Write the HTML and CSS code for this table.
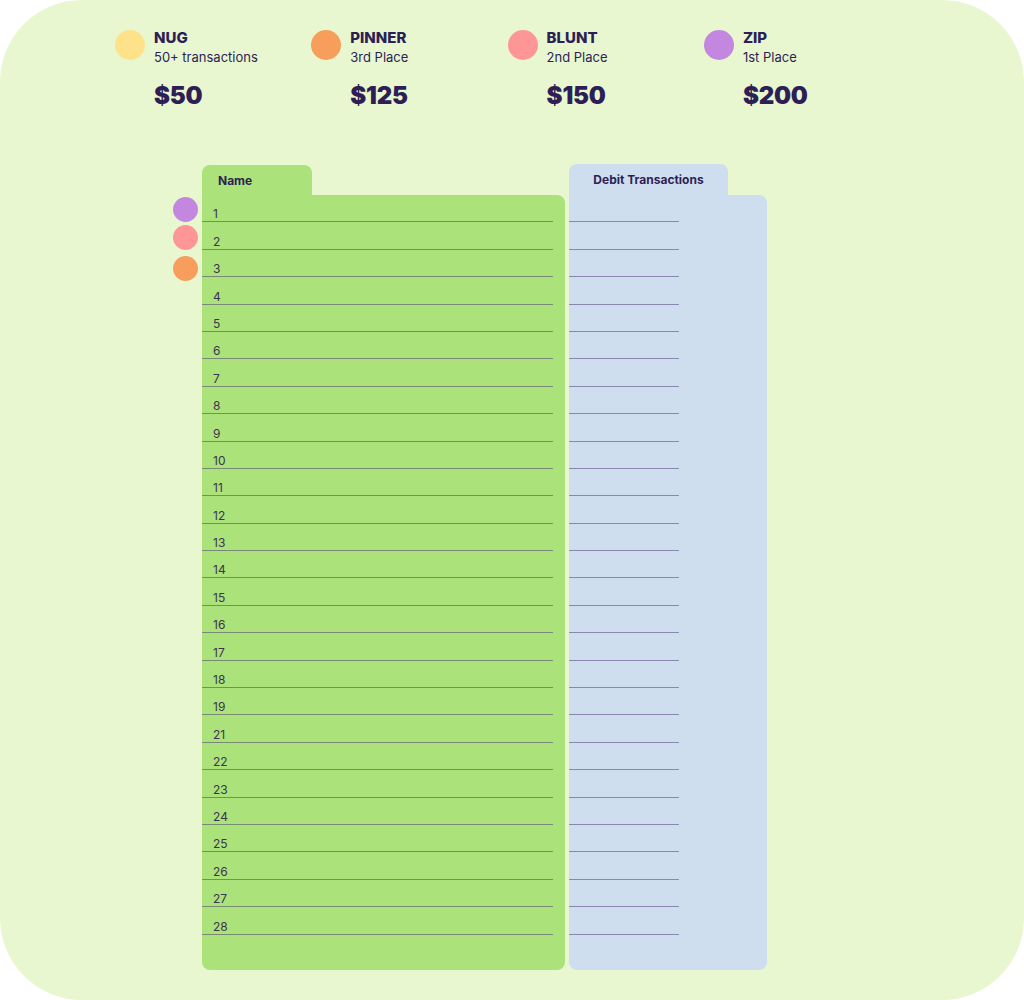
FILE: index.html
```html
<!DOCTYPE html>
<html lang="en">

<head>
    <meta charset="UTF-8">
    <meta name="viewport" content="width=device-width, initial-scale=1.0">
    <title>Leaderboard</title>
    <link rel="stylesheet" href="styles.css">
</head>

<body>

    <div class="page">
        <div class="prizes">
            <div class="prize">
                <div class="prize-head">
                    <span class="dot yellow"></span>
                    <div>
                        <div class="prize-name">NUG</div>
                        <div class="prize-sub">50+ transactions</div>
                    </div>
                </div>
                <div class="prize-amount">$50</div>
            </div>
            <div class="prize">
                <div class="prize-head">
                    <span class="dot orange"></span>
                    <div>
                        <div class="prize-name">PINNER</div>
                        <div class="prize-sub">3rd Place</div>
                    </div>
                </div>
                <div class="prize-amount">$125</div>
            </div>
            <div class="prize">
                <div class="prize-head">
                    <span class="dot pink"></span>
                    <div>
                        <div class="prize-name">BLUNT</div>
                        <div class="prize-sub">2nd Place</div>
                    </div>
                </div>
                <div class="prize-amount">$150</div>
            </div>
            <div class="prize">
                <div class="prize-head">
                    <span class="dot purple"></span>
                    <div>
                        <div class="prize-name">ZIP</div>
                        <div class="prize-sub">1st Place</div>
                    </div>
                </div>
                <div class="prize-amount">$200</div>
            </div>
        </div>

        <div class="board">
            <div class="markers">
                <span class="marker purple"></span>
                <span class="marker pink"></span>
                <span class="marker orange third"></span>
            </div>

            <div class="col names">
                <div class="tab">Name</div>
                <div class="panel">
                    <div class="row">1</div>
                    <div class="row">2</div>
                    <div class="row">3</div>
                    <div class="row">4</div>
                    <div class="row">5</div>
                    <div class="row">6</div>
                    <div class="row">7</div>
                    <div class="row">8</div>
                    <div class="row">9</div>
                    <div class="row">10</div>
                    <div class="row">11</div>
                    <div class="row">12</div>
                    <div class="row">13</div>
                    <div class="row">14</div>
                    <div class="row">15</div>
                    <div class="row">16</div>
                    <div class="row">17</div>
                    <div class="row">18</div>
                    <div class="row">19</div>
                    <div class="row">21</div>
                    <div class="row">22</div>
                    <div class="row">23</div>
                    <div class="row">24</div>
                    <div class="row">25</div>
                    <div class="row">26</div>
                    <div class="row">27</div>
                    <div class="row">28</div>
                </div>
            </div>

            <div class="col debits">
                <div class="tab">Debit Transactions</div>
                <div class="panel">
                    <div class="row"></div>
                    <div class="row"></div>
                    <div class="row"></div>
                    <div class="row"></div>
                    <div class="row"></div>
                    <div class="row"></div>
                    <div class="row"></div>
                    <div class="row"></div>
                    <div class="row"></div>
                    <div class="row"></div>
                    <div class="row"></div>
                    <div class="row"></div>
                    <div class="row"></div>
                    <div class="row"></div>
                    <div class="row"></div>
                    <div class="row"></div>
                    <div class="row"></div>
                    <div class="row"></div>
                    <div class="row"></div>
                    <div class="row"></div>
                    <div class="row"></div>
                    <div class="row"></div>
                    <div class="row"></div>
                    <div class="row"></div>
                    <div class="row"></div>
                    <div class="row"></div>
                    <div class="row"></div>
                </div>
            </div>
        </div>
    </div>

</body>

</html>
```

FILE: styles.css
```css
* {
    margin: 0;
    box-sizing: border-box;
}

body {
    margin: 0;
    padding: 0;
    background-color: #ffffff;
    font-family: Inter, "Open Sans", sans-serif;
    color: #2d1f55;
}

.page {
    width: 1024px;
    height: 1000px;
    background-color: #e8f7cf;
    border-radius: 82px;
    padding-top: 30px;
}

/* prizes */
.prizes {
    display: flex;
    padding-left: 115px;
}

.prize {
    width: 196.3px;
}

.prize-head {
    display: flex;
    align-items: flex-start;
}

.dot {
    width: 30px;
    height: 30px;
    border-radius: 50%;
    margin-right: 9px;
    flex-shrink: 0;
}

.prize-name {
    font-size: 15px;
    font-weight: 800;
    line-height: 18px;
    margin-top: -1px;
}

.prize-sub {
    font-size: 13px;
    line-height: 18px;
    margin-top: 1px;
}

.prize-amount {
    margin-left: 39px;
    margin-top: 15px;
    font-size: 24px;
    line-height: 30px;
    font-weight: 900;
    letter-spacing: -0.2px;
}

.yellow { background-color: #fde28a; }
.orange { background-color: #f79e5c; }
.pink { background-color: #ff9696; }
.purple { background-color: #c387e0; }

/* board */
.board {
    display: flex;
    align-items: flex-start;
    margin-top: 53px;
    padding-left: 173px;
}

.markers {
    width: 29px;
    margin-top: 31px;
    display: flex;
    flex-direction: column;
}

.marker {
    width: 25px;
    height: 25px;
    border-radius: 50%;
    margin-top: 3px;
}

.marker:first-child {
    margin-top: 2px;
}

.marker.third {
    margin-top: 6px;
}

.col {
    display: flex;
    flex-direction: column;
}

.names {
    width: 363px;
}

.debits {
    width: 198px;
    margin-left: 4px;
}

.tab {
    height: 30px;
    margin-top: 1px;
    border-radius: 8px 8px 0 0;
    font-size: 12px;
    font-weight: 700;
    display: flex;
    align-items: center;
}

.names .tab {
    width: 110px;
    padding-left: 16px;
    background-color: #abe27a;
}

.debits .tab {
    width: 159px;
    height: 31px;
    margin-top: 0;
    justify-content: center;
    background-color: #cedeee;
}

.panel {
    height: 775px;
    border-radius: 0 8px 8px 8px;
}

.names .panel {
    background-color: #abe27a;
    padding-right: 12px;
}

.debits .panel {
    background-color: #cedeee;
    padding-right: 88px;
}

.row {
    height: 27.4px;
    border-bottom: 1px solid rgba(70, 50, 110, 0.5);
    display: flex;
    align-items: flex-end;
    padding-left: 11px;
    padding-bottom: 0;
    font-size: 12px;
    line-height: 14px;
    color: #3a3550;
}
```
